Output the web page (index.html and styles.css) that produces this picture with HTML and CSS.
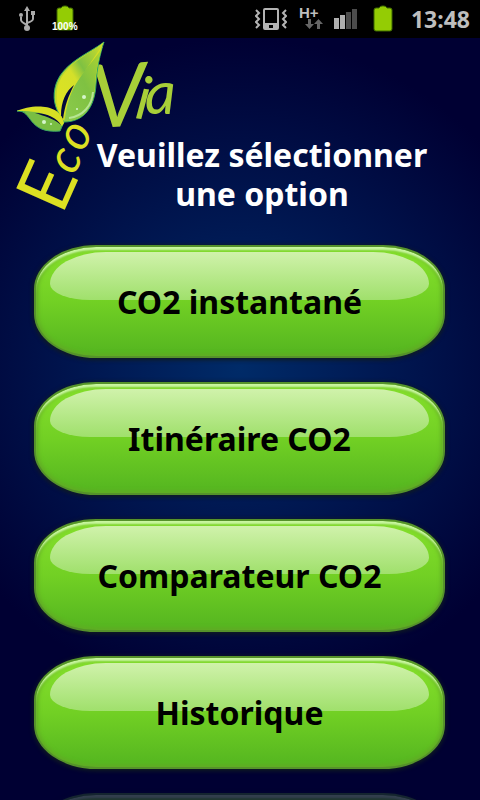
FILE: index.html
```html
<!DOCTYPE html>
<html lang="fr">
<head>
<meta charset="utf-8">
<meta name="viewport" content="width=device-width, initial-scale=1">
<title>EcoVia</title>
<link rel="stylesheet" href="styles.css">
</head>
<body>
<div class="status">
  <svg class="usb" width="18" height="28" viewBox="0 0 18 28" aria-hidden="true">
    <g fill="none" stroke="#aaa" stroke-width="2">
      <path d="M9 4v20M3 12v3q0 2 6 5M15 10v4q0 2-6 4"/>
    </g>
    <g fill="#aaa"><path d="M9 1l3 5H6z"/><circle cx="9" cy="23" r="3"/><circle cx="3" cy="10" r="2"/><path d="M13 6h4v4h-4z"/></g>
  </svg>
  <div class="charge">
    <svg width="24" height="28" viewBox="0 0 24 28" aria-hidden="true"><path class="cell" d="M4 5q0-2 2-2h2q1-2 3-2h2q2 0 3 2h2q2 0 2 2v19q0 1-2 1H6q-2 0-2-1z"/></svg>
    <span class="percent">100%</span>
  </div>
  <span class="spacer"></span>
  <svg class="vibrate" width="32" height="24" viewBox="0 0 32 24" aria-hidden="true">
    <g fill="none" stroke="#b4b4b4" stroke-width="2">
      <rect x="9" y="2" width="14" height="20" rx="1"/>
      <path d="M1 3l3 3-3 3 3 3-3 3 3 3-3 3M31 3l-3 3 3 3-3 3 3 3-3 3 3 3"/>
    </g>
    <path fill="#b4b4b4" fill-rule="evenodd" d="M9 16h14v6H9zM14 18v3h4v-3z"/>
  </svg>
  <div class="network">
    <span>H+</span>
    <svg width="18" height="10" viewBox="0 0 18 10" aria-hidden="true"><path fill="#666" d="M3 0h3v5h3l-4.500 5L0 5h3zM12 10h3V5h3l-4.500-5L9 5h3z"/></svg>
  </div>
  <svg class="signal" width="24" height="22" viewBox="0 0 24 22" aria-hidden="true"><path fill="#b0b0b0" d="M0 10h5v11H0zM6 7h5v14H6z"/><path fill="#4c4c4c" d="M12 4h5v17h-5zM18 1h5v20h-5z"/></svg>
  <svg class="battery" width="24" height="28" viewBox="0 0 24 28" aria-hidden="true"><path class="cell" d="M3 5q0-2 2-2h3q1-2 3-2h2q2 0 3 2h3q2 0 2 2v19q0 2-2 2H5q-2 0-2-2z"/></svg>
  <time class="clock">13:48</time>
</div>
<main>
  <header>
    <svg class="logo" width="180" height="180" viewBox="0 38 180 180" role="img" aria-label="EcoVia">
      <defs>
        <linearGradient id="lime" x1="0" y1="0" x2="1" y2="1"><stop offset="0" stop-color="#86c440"/><stop offset=".5" stop-color="#d6df23"/><stop offset="1" stop-color="#8dc63f"/></linearGradient>
        <linearGradient id="leaf" x1="0" y1="1" x2="1" y2="0"><stop offset="0" stop-color="#8ccb4c"/><stop offset=".5" stop-color="#7fc142"/><stop offset="1" stop-color="#b9d92c"/></linearGradient>
        <linearGradient id="rim" x1="0" y1="1" x2="1" y2="0"><stop offset="0" stop-color="#e0e31e"/><stop offset=".45" stop-color="#d4e02a"/><stop offset=".6" stop-color="#7fc142"/><stop offset="1" stop-color="#d4e02a"/></linearGradient>
      </defs>
      <g class="eco">
        <text class="e" transform="translate(62 216) rotate(-66)">E</text>
        <text class="co" transform="translate(74 176) rotate(-64)">c</text>
        <text class="co" transform="translate(83 153) rotate(-64)">o</text>
      </g>
      <g class="via">
        <text class="v" transform="translate(92 128) rotate(-3)">V</text>
        <text class="i" transform="translate(134 118) rotate(8)">i</text>
        <text class="a" transform="translate(145 114)">a</text>
      </g>
      <path fill="url(#lime)" stroke="#2fa866" stroke-width="1" d="M104 42C88 54 60 64 55 88C52 102 57 112 64 122C84 122 95 107 96 84C97 68 100 54 104 42z"/>
      <path fill="url(#leaf)" d="M104 42C99 62 71 72 65 118L64 121C84 122 94 107 95 84C96 68 100 54 104 42z"/>
      <path fill="url(#rim)" d="M104 42C88 56 62 64 57 90C56 102 58 110 62 116C64 94 85 74 104 42z"/>
      <path fill="#02083c" d="M61 116C61 101 66 91 74 85C68 97 65 105 63 119z"/>
      <path fill="none" stroke="#b7e594" stroke-width="2" d="M69 118C83 116 92 106 93 92"/>
      <path fill="#79be43" stroke="#3aa764" stroke-width="1" d="M17 111C33 110 27 134 60 131L64 122C56 114 42 109 17 111z"/>
      <path fill="#d6df23" d="M17 111C30 105 60 102 64 123L62 126C52 114 39 111 17 111z"/>
      <path fill="#02083c" d="M35 113C47 113 57 118 61 125C53 118 44 116 35 113z"/>
      <g fill="#d5f5cb"><circle cx="84" cy="97" r="2"/><circle cx="77" cy="109" r="1"/><circle cx="44" cy="122" r="2"/><circle cx="51" cy="124" r="1"/></g>
    </svg>
    <h1>Veuillez sélectionner<br>une option</h1>
  </header>
  <nav>
    <button type="button"><span>CO2 instantané</span></button>
    <button type="button"><span>Itinéraire CO2</span></button>
    <button type="button"><span>Comparateur CO2</span></button>
    <button type="button"><span>Historique</span></button>
    <button type="button" class="next" aria-hidden="true" tabindex="-1"></button>
  </nav>
</main>
</body>
</html>
```
FILE: styles.css
```css
* { box-sizing: border-box; }
body {
  margin: 0;
  height: 100vh;
  overflow: hidden;
  display: flex;
  flex-direction: column;
  background: #000033;
  font-family: "Noto Sans", "Open Sans", sans-serif;
}
.status {
  display: flex;
  align-items: center;
  height: 38px;
  flex: none;
  padding: 0 10px 0 18px;
  background: #000;
  color: #bebebe;
}
.spacer { flex: 1; }
.charge { position: relative; display: flex; margin-left: 17px; }
.cell { fill: #94cc04; stroke: #3c6800; stroke-width: 1; }
.percent {
  position: absolute;
  left: -1px;
  bottom: 0;
  font: bold 10px/12px "Liberation Sans", sans-serif;
  color: #fff;
}
.vibrate { margin-right: 12px; }
.network {
  display: flex;
  flex-direction: column;
  width: 24px;
  margin-right: 11px;
  padding-bottom: 2px;
  font: bold 15px/12px "Liberation Sans", sans-serif;
}
.network svg { align-self: flex-end; }
.signal { margin-right: 13px; }
.battery { margin-right: 16px; }
.clock { font-size: 23px; line-height: 38px; font-weight: 700; }
main {
  flex: 1;
  min-height: 0;
  overflow: hidden;
  background: radial-gradient(circle 330px at 50% 330px, #002b68 0%, #00134c 55%, #000033 100%);
}
header { position: relative; height: 207px; padding: 97px 0 0 44px; }
.logo { position: absolute; left: 0; top: 0; overflow: visible; }
.eco { fill: #dce022; font-family: Lato, sans-serif; }
.via { fill: #a8cf38; font-family: Lato, sans-serif; font-style: italic; }
.e { font-size: 74px; }
.co { font-size: 48px; font-style: italic; }
.v { font-size: 88px; }
.i, .a { font-size: 60px; }
h1 {
  position: relative;
  margin: 0;
  text-align: center;
  color: #fff;
  font-size: 32px;
  line-height: 39px;
  font-weight: 700;
}
nav { display: flex; flex-direction: column; gap: 24px; padding: 0 35px 0 34px; }
button {
  position: relative;
  flex: none;
  height: 113px;
  padding: 0;
  border: 2px solid #55922a;
  border-radius: 62px / 44px;
  background: linear-gradient(#86e02c, #72d024 50%, #54b520);
  box-shadow: 0 1px 4px 1px #101c20, inset 0 4px 2px -1px #c9f7a0, inset 0 0 4px 2px #62ab25;
  color: #000;
  font-family: inherit;
  font-size: 32px;
  line-height: 40px;
  font-weight: 700;
}
button::before {
  content: "";
  position: absolute;
  inset: 5px 14px auto;
  height: 48px;
  border-radius: 56px 56px 40px 40px / 32px 32px 16px 16px;
  background: linear-gradient(#d0f2ab, #a0e06c);
}
button span { position: relative; }
.next { opacity: .25; }
```
